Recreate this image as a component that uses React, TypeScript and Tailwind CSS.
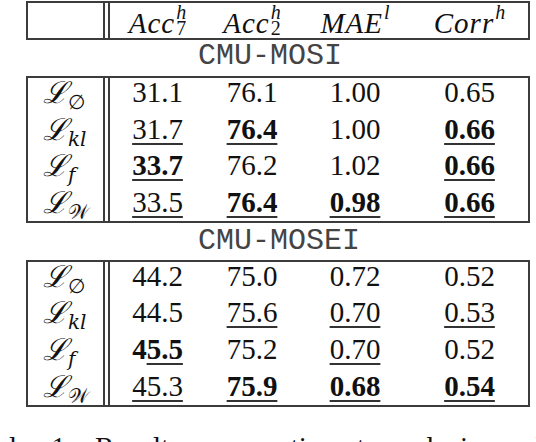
import React from 'react';

type Cell = { v: string; b?: boolean; u?: boolean; split?: boolean };

const serif = "font-['Liberation_Serif','Times_New_Roman',serif]";
const line = 'border-[#3c3c3c]';

const mosi: { label: React.ReactNode; cells: Cell[] }[] = [
  { label: <Sub s="∅" />, cells: [{ v: '31.1' }, { v: '76.1' }, { v: '1.00' }, { v: '0.65' }] },
  { label: <Sub s="kl" it />, cells: [{ v: '31.7', u: true }, { v: '76.4', b: true, u: true }, { v: '1.00' }, { v: '0.66', b: true, u: true }] },
  { label: <Sub s="f" it />, cells: [{ v: '33.7', b: true, u: true }, { v: '76.2' }, { v: '1.02' }, { v: '0.66', b: true, u: true }] },
  { label: <Sub s="𝒲" />, cells: [{ v: '33.5', u: true }, { v: '76.4', b: true, u: true }, { v: '0.98', b: true, u: true }, { v: '0.66', b: true, u: true }] },
];

const mosei: { label: React.ReactNode; cells: Cell[] }[] = [
  { label: <Sub s="∅" />, cells: [{ v: '44.2' }, { v: '75.0' }, { v: '0.72' }, { v: '0.52' }] },
  { label: <Sub s="kl" it />, cells: [{ v: '44.5' }, { v: '75.6', u: true }, { v: '0.70', u: true }, { v: '0.53', u: true }] },
  { label: <Sub s="f" it />, cells: [{ v: '45.5', b: true, split: true }, { v: '75.2' }, { v: '0.70', u: true }, { v: '0.52' }] },
  { label: <Sub s="𝒲" />, cells: [{ v: '45.3', u: true }, { v: '75.9', b: true, u: true }, { v: '0.68', b: true, u: true }, { v: '0.54', b: true, u: true }] },
];

function Sub({ s, it }: { s: string; it?: boolean }) {
  return (
    <span className="inline-flex items-baseline">
      <span className="font-['DejaVu_Serif',serif] italic text-[30px]">ℒ</span>
      <span className={`text-[20px] relative top-[6px] ${it ? 'italic' : ''} font-['DejaVu_Serif',serif]`}>{s}</span>
    </span>
  );
}

function Value({ c }: { c: Cell }) {
  const u = 'underline decoration-2 underline-offset-[4px] decoration-[#333]';
  if (c.split) {
    return (
      <span className="font-bold">
        {c.v[0]}
        <span className={u}>{c.v.slice(1)}</span>
      </span>
    );
  }
  return <span className={`${c.b ? 'font-bold' : ''} ${c.u ? u : ''}`}>{c.v}</span>;
}

function Head({ base, sup, sub }: { base: string; sup: string; sub?: string }) {
  return (
    <span className="inline-flex items-start">
      <span className="italic tracking-[1px]">{base}</span>
      <span className="flex flex-col items-start text-[20px] leading-[16px] -mt-[5px] ml-[1px]">
        <span className="italic">{sup}</span>
        <span>{sub ?? '\u00a0'}</span>
      </span>
    </span>
  );
}

function Row({
  label,
  children,
  h,
}: {
  label: React.ReactNode;
  children: React.ReactNode;
  h: string;
}) {
  return (
    <div className={`flex ${h}`}>
      <div className={`w-[77px] border-r-2 ${line} pl-[15px]`}>{label}</div>
      <div className="w-[3px]" />
      <div className={`flex-1 border-l-2 ${line} grid grid-cols-[95px_94px_112px_1fr] text-center`}>
        {children}
      </div>
    </div>
  );
}

function Block({ rows }: { rows: { label: React.ReactNode; cells: Cell[] }[] }) {
  return (
    <div className={`border-2 ${line} leading-[29px]`}>
      {rows.map((r, i) => (
        <Row key={i} label={r.label} h={i === rows.length - 1 ? 'h-[33px]' : 'h-[36.6px]'}>
          {r.cells.map((c, j) => (
            <div key={j}>
              <Value c={c} />
            </div>
          ))}
        </Row>
      ))}
    </div>
  );
}

function Section({ name, h, pt }: { name: string; h: string; pt: string }) {
  return (
    <div className={`${h} ${pt} pl-[172px] font-['Liberation_Mono','Courier_New',monospace] text-[30px] leading-[28px] text-[#444]`}>
      {name}
    </div>
  );
}

export default function App() {
  return (
    <div className={`w-[536px] h-[442px] overflow-hidden bg-white text-[#111] ${serif} text-[29px]`}>
      <div className="ml-[26px] w-[504px] mt-[1px]">
        <div className={`border-2 ${line} leading-[29px]`}>
          <Row label={null} h="h-[35px]">
            <div className="pt-[6px]"><Head base="Acc" sup="h" sub="7" /></div>
            <div className="pt-[6px]"><Head base="Acc" sup="h" sub="2" /></div>
            <div className="pt-[6px]"><Head base="MAE" sup="l" /></div>
            <div className="pt-[6px]"><Head base="Corr" sup="h" /></div>
          </Row>
        </div>
        <Section name="CMU-MOSI" h="h-[36px]" pt="pt-[2px]" />
        <Block rows={mosi} />
        <Section name="CMU-MOSEI" h="h-[37px]" pt="pt-[4px]" />
        <Block rows={mosei} />
      </div>
      <p className="mt-[26px] -ml-[34px] whitespace-nowrap leading-[29px] [word-spacing:14px]">
        Table 1: Results on sentiment analysis and emotion
      </p>
    </div>
  );
}
